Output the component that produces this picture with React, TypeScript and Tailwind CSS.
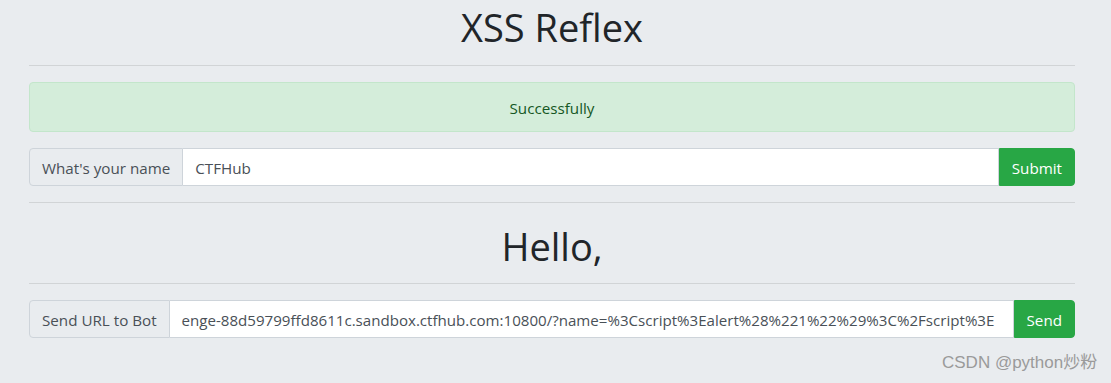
import React from "react";

const URL_TEXT =
  "enge-88d59799ffd8611c.sandbox.ctfhub.com:10800/?name=%3Cscript%3Ealert%28%221%22%29%3C%2Fscript%3E";

function InputGroup({
  label,
  button,
  children,
}: {
  label: string;
  button: string;
  children: React.ReactNode;
}) {
  return (
    <div className="flex h-[38px] items-stretch">
      <div className="flex shrink-0 items-center whitespace-nowrap rounded-l-[4px] border border-[#ced4da] bg-[#e9ecef] px-3 pt-px text-[#495057]">
        {label}
      </div>
      <div className="flex min-w-0 flex-1 items-center border-y border-r border-[#ced4da] bg-white px-3 pt-px text-[#495057]">
        {children}
      </div>
      <button className="shrink-0 rounded-r-[4px] border border-[#28a745] bg-[#28a745] px-3 pt-px text-white">
        {button}
      </button>
    </div>
  );
}

export default function App() {
  return (
    <div className="relative min-h-screen bg-[#e9ecef] font-['Open_Sans',sans-serif] text-[15.2px] leading-6 text-[#212529]">
      <div className="ml-[29px] w-[1046px] pt-[4px]">
        <h1 className="text-center text-[38px] font-normal leading-[46px] text-[#212529]">XSS Reflex</h1>
        <hr className="mt-[15px] border-t border-black/10" />
        <div className="mt-[16px] flex h-[50px] items-center justify-center rounded-[4px] border border-[#c3e6cb] bg-[#d4edda] pt-[2px] text-[#155724]">
          Successfully
        </div>
        <div className="mt-[16px]">
          <InputGroup label="What's your name" button="Submit">
            <span>CTFHub</span>
          </InputGroup>
        </div>
        <hr className="mt-[16px] border-t border-black/10" />
        <h1 className="mt-[20px] text-center text-[38px] font-normal leading-[46px] text-[#212529]">Hello,</h1>
        <hr className="mt-[14px] border-t border-black/10" />
        <div className="mt-[16px]">
          <InputGroup label="Send URL to Bot" button="Send">
            <span className="whitespace-nowrap text-[15.1px]">{URL_TEXT}</span>
          </InputGroup>
        </div>
      </div>
      <div className="absolute left-[942px] top-[352px] whitespace-nowrap font-['Liberation_Sans','Noto_Sans_CJK_SC',sans-serif] text-[17px] leading-[22px] text-[#9a9a9a]">
        CSDN @python炒粉
      </div>
    </div>
  );
}
